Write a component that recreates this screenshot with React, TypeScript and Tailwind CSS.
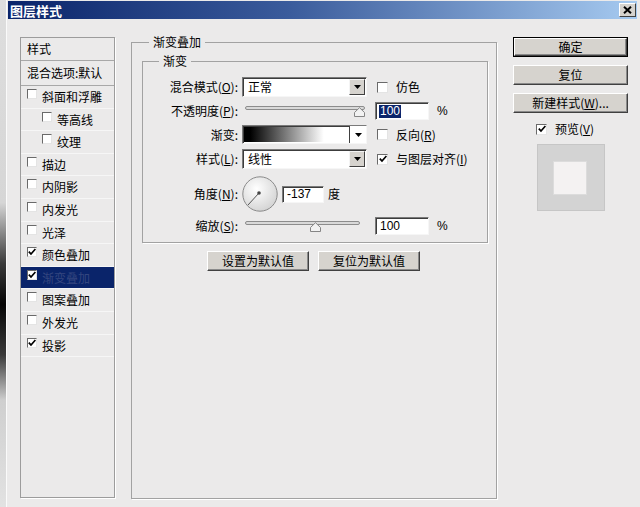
import React from "react";

const F = "font-['Noto_Sans_CJK_SC','Noto_Sans',sans-serif]";
const NUM = "font-['Liberation_Sans','Noto_Sans_CJK_SC',sans-serif]";

function Check({ checked, size = 11 }: { checked?: boolean; size?: number }) {
  return (
    <span
      className={`${size === 10 ? "w-[10px] h-[10px]" : "w-[11px] h-[11px]"} shrink-0 bg-white border border-t-[#6a6a6a] border-l-[#6a6a6a] border-r-[#e4e4e4] border-b-[#e4e4e4] flex items-center justify-center`}
    >
      {checked && (
        <svg width="8" height="8" viewBox="0 0 8 8">
          <path d="M0.8 3.6 L3 6 L7.4 1" stroke="#000" strokeWidth="1.7" fill="none" />
        </svg>
      )}
    </span>
  );
}

function Tri() {
  return (
    <svg width="7" height="4" viewBox="0 0 7 4">
      <path d="M0 0 H7 L3.5 4 Z" fill="#000" />
    </svg>
  );
}

function DropBtn() {
  return (
    <div className="w-[16px] h-[16px] mt-[1px] mr-[1px] bg-[#d6d3ce] border border-t-[#f4f4f4] border-l-[#f4f4f4] border-r-[#404040] border-b-[#404040] flex items-center justify-center">
      <Tri />
    </div>
  );
}

const sunken =
  "bg-white border border-t-[#7a7a7a] border-l-[#7a7a7a] border-r-[#f6f6f6] border-b-[#f6f6f6] shadow-[inset_1px_1px_0_#3c3c3c]";

function Select({ value }: { value: string }) {
  return (
    <div className={`w-[125px] h-[20px] flex ${sunken}`}>
      <span className="flex-1 pl-[5px] leading-[18px]">{value}</span>
      <DropBtn />
    </div>
  );
}

function Label({ children }: { children: React.ReactNode }) {
  return <div className="w-[95px] text-right leading-[16px] shrink-0">{children}</div>;
}

function Thumb() {
  return (
    <svg width="11" height="10" viewBox="0 0 11 10">
      <path d="M0.5 9.5 L0.5 5.5 L5.5 0.7 L10.5 5.5 L10.5 9.5 Z" fill="#f2f2f2" stroke="#858585" />
    </svg>
  );
}

function Slider({ width, thumbLeft }: { width: number; thumbLeft: number }) {
  return (
    <div className="relative w-[125px] h-full shrink-0">
      <div
        className="absolute left-[3px] top-[4px] h-[4px] rounded-full border border-[#8c8c8c] bg-[#d9d9d9]"
        style={{ width }}
      />
      <div className="absolute top-[5px]" style={{ left: thumbLeft }}>
        <Thumb />
      </div>
    </div>
  );
}

function Btn({ children, w, def }: { children: React.ReactNode; w: string; def?: boolean }) {
  const inner = (
    <div className="h-full w-full bg-[#d6d3ce] border border-t-white border-l-white border-r-[#404040] border-b-[#404040] shadow-[inset_-1px_-1px_0_#8a8a8a] flex items-center justify-center leading-none">
      {children}
    </div>
  );
  if (def)
    return <div className={`${w} h-[20px] border border-black`}>{inner}</div>;
  return <div className={`${w} h-[20px]`}>{inner}</div>;
}

function ListItem({
  label,
  checked,
  indent,
  selected,
}: {
  label: string;
  checked?: boolean;
  indent?: boolean;
  selected?: boolean;
}) {
  return (
    <div
      className={`h-[22.6px] flex items-start border-b border-[#f6f6f6] ${
        selected ? "bg-[#0a246a] text-[#34467f]" : ""
      } ${indent ? "pl-[21px]" : "pl-[6px]"}`}
    >
      <span className="mt-[3px]">
        <Check checked={checked} size={10} />
      </span>
      <span className="ml-[5px] mt-[3px] leading-[16px]">{label}</span>
    </div>
  );
}

export default function App() {
  return (
    <div className={`w-[640px] h-[507px] bg-[#ebeaea] flex overflow-hidden text-[12px] text-black ${F}`}>
      <div className="w-[6px] h-full shrink-0 bg-[linear-gradient(to_bottom,#dedede_0%,#d6d6d6_40%,#3a3a3a_52%,#050505_60%,#3a3a3a_70%,#cfcfcf_79%,#e2e2e2_100%)]" />
      <div className="flex-1 flex flex-col border-l border-[#fafafa] pl-[1px] pr-[3px]">
        {/* Title bar */}
        <div className="mt-[1px] h-[18px] flex items-center bg-[linear-gradient(to_right,#0a246a,#3b5c9c_45%,#a6caf0)]">
          <span className="pl-[2px] text-white font-bold text-[13px] leading-none">图层样式</span>
          <div className="flex-1" />
          <div className="w-[17px] h-[14px] mr-[1px] bg-[#d6d3ce] border border-t-white border-l-white border-r-[#404040] border-b-[#404040] flex items-center justify-center">
            <svg width="9" height="8" viewBox="0 0 9 8">
              <path d="M1 0.8 L8 7.2 M8 0.8 L1 7.2" stroke="#000" strokeWidth="2" />
            </svg>
          </div>
        </div>

        <div className="flex items-start">
          {/* Left list */}
          <div className="ml-[12px] mt-[18px] w-[95px] h-[461px] shrink-0 border border-[#9c9c9c] shadow-[1px_1px_0_#fff] flex flex-col">
            <div className="h-[23px] border-b border-[#a8a8a8] pl-[6px] leading-[22px]">样式</div>
            <div className="h-[25px] border-b border-[#a8a8a8] pl-[6px] leading-[24px] whitespace-nowrap">混合选项:默认</div>
            <ListItem label="斜面和浮雕" />
            <ListItem label="等高线" indent />
            <ListItem label="纹理" indent />
            <ListItem label="描边" />
            <ListItem label="内阴影" />
            <ListItem label="内发光" />
            <ListItem label="光泽" />
            <ListItem label="颜色叠加" checked />
            <ListItem label="渐变叠加" checked selected />
            <ListItem label="图案叠加" />
            <ListItem label="外发光" />
            <ListItem label="投影" checked />
          </div>

          {/* Main fieldset */}
          <fieldset className="ml-[16px] mt-[15px] w-[366px] h-[465px] shrink-0 border border-[#a2a2a2] shadow-[1px_1px_0_#fff]">
            <legend className="ml-[17px] px-[4px] leading-[16px]">渐变叠加</legend>
            <fieldset className="ml-[10px] mt-[3px] w-[346px] h-[190px] border border-[#a2a2a2] shadow-[1px_1px_0_#fff]">
              <legend className="ml-[16px] px-[4px] leading-[16px]">渐变</legend>
              <div className="flex flex-col pt-[8px]">
                {/* Row 1 */}
                <div className="flex items-center h-[20px]">
                  <Label>
                    混合模式(<span className="underline">O</span>):
                  </Label>
                  <div className="ml-[4px]">
                    <Select value="正常" />
                  </div>
                  <div className="ml-[10px] flex items-center">
                    <Check />
                    <span className="ml-[8px]">仿色</span>
                  </div>
                </div>
                {/* Row 2 */}
                <div className="flex items-center h-[18px] mt-[5px]">
                  <Label>
                    不透明度(<span className="underline">P</span>):
                  </Label>
                  <div className="ml-[4px] h-full">
                    <Slider width={120} thumbLeft={112} />
                  </div>
                  <div className={`ml-[8px] w-[54px] h-[18px] ${sunken} flex items-center pl-[3px] ${NUM}`}>
                    <span className="bg-[#0a246a] text-white leading-[13px] px-[1px]">100</span>
                  </div>
                  <span className={`ml-[8px] ${NUM}`}>%</span>
                </div>
                {/* Row 3 */}
                <div className="flex items-center h-[19px] mt-[5px]">
                  <Label>渐变:</Label>
                  <div className={`ml-[4px] w-[125px] h-[19px] flex ${sunken}`}>
                    <div className="flex-1 mt-[1px] mb-[1px] ml-[1px] bg-[linear-gradient(to_right,#000_0%,#000_6%,#fff_76%,#fff_100%)]" />
                    <div className="w-[17px] border-l border-[#404040] bg-white flex items-center justify-center">
                      <Tri />
                    </div>
                  </div>
                  <div className="ml-[10px] flex items-center">
                    <Check />
                    <span className="ml-[8px]">
                      反向(<span className="underline">R</span>)
                    </span>
                  </div>
                </div>
                {/* Row 4 */}
                <div className="flex items-center h-[20px] mt-[5px]">
                  <Label>
                    样式(<span className="underline">L</span>):
                  </Label>
                  <div className="ml-[4px]">
                    <Select value="线性" />
                  </div>
                  <div className="ml-[10px] flex items-center">
                    <Check checked />
                    <span className="ml-[8px]">
                      与图层对齐(<span className="underline">I</span>)
                    </span>
                  </div>
                </div>
                {/* Row 5 */}
                <div className="flex items-center h-[36px] mt-[7px]">
                  <Label>
                    角度(<span className="underline">N</span>):
                  </Label>
                  <div className="ml-[4px] w-[36px] h-[36px]">
                    <svg width="36" height="36" viewBox="0 0 36 36">
                      <defs>
                        <radialGradient id="dial" cx="0.4" cy="0.35" r="0.7">
                          <stop offset="0" stopColor="#ffffff" />
                          <stop offset="1" stopColor="#d2d2d2" />
                        </radialGradient>
                      </defs>
                      <circle cx="18" cy="18" r="17.2" fill="url(#dial)" stroke="#8a8a8a" strokeWidth="1" />
                      <line x1="17" y1="17" x2="6" y2="29" stroke="#555" strokeWidth="1" />
                      <circle cx="17" cy="17" r="1.8" fill="#444" />
                    </svg>
                  </div>
                  <div className={`ml-[4px] w-[42px] h-[17px] ${sunken} flex items-center pl-[4px] ${NUM}`}>
                    <span className="leading-none">-137</span>
                  </div>
                  <span className="ml-[4px]">度</span>
                </div>
                {/* Row 6 */}
                <div className="flex items-center h-[18px] mt-[5px]">
                  <Label>
                    缩放(<span className="underline">S</span>):
                  </Label>
                  <div className="ml-[4px] h-full">
                    <Slider width={115} thumbLeft={68} />
                  </div>
                  <div className={`ml-[8px] w-[54px] h-[18px] ${sunken} flex items-center pl-[4px] ${NUM}`}>
                    <span className="leading-none">100</span>
                  </div>
                  <span className={`ml-[8px] ${NUM}`}>%</span>
                </div>
              </div>
            </fieldset>
            <div className="flex pl-[75px] mt-[8px] gap-[9px]">
              <Btn w="w-[102px]">设置为默认值</Btn>
              <Btn w="w-[102px]">复位为默认值</Btn>
            </div>
          </fieldset>

          {/* Right column */}
          <div className="ml-[16px] mt-[18px] w-[115px] shrink-0 flex flex-col">
            <Btn w="w-[115px]" def>
              确定
            </Btn>
            <div className="mt-[8px]">
              <Btn w="w-[115px]">复位</Btn>
            </div>
            <div className="mt-[8px]">
              <Btn w="w-[115px]">
                新建样式(<span className="underline">W</span>)...
              </Btn>
            </div>
            <div className="mt-[9px] ml-[23px] flex items-center h-[14px]">
              <Check checked />
              <span className="ml-[8px]">
                预览(<span className="underline">V</span>)
              </span>
            </div>
            <div className="mt-[8px] ml-[24px] w-[68px] h-[67px] bg-[#d3d3d3] border border-[#c6c6c6] pt-[16px] pl-[15px]">
              <div className="w-[34px] h-[34px] bg-[#f4f2f2] border border-[#dcdcdc]" />
            </div>
          </div>
        </div>
      </div>
    </div>
  );
}
